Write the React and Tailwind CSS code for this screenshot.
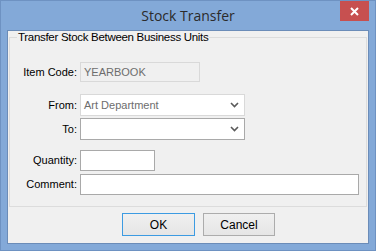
import React from 'react';

const Chevron = () => (
  <svg width="9" height="6" viewBox="0 0 9 6" className="shrink-0">
    <path d="M1 1 L4.5 4.5 L8 1" fill="none" stroke="#5a5a5a" strokeWidth="1.6" />
  </svg>
);

const Label = ({ children }) => (
  <span className="w-[67px] shrink-0 text-right pr-[3px] text-[#000]">{children}</span>
);

const App = () => {
  return (
    <div
      className="w-[376px] h-[251px] bg-[#83a9d8] border border-[#6e92c2] flex flex-col select-none"
      style={{ fontFamily: '"Liberation Sans", Arial, sans-serif' }}
    >
      {/* Title bar */}
      <div className="h-[29px] grid grid-cols-[1fr_auto_1fr] items-start">
        <div />
        <div className="pt-[4px] text-[14px] text-[#2b2b2b] font-['Open_Sans',sans-serif]">Stock Transfer</div>
        <div className="flex justify-end pr-[6px]">
          <div className="w-[29px] h-[20px] bg-[#c75050] flex items-center justify-center">
            <svg width="9" height="9" viewBox="0 0 9 9">
              <path d="M1 1 L8 8 M8 1 L1 8" stroke="#fff" strokeWidth="2" />
            </svg>
          </div>
        </div>
      </div>

      {/* Client area */}
      <div className="mx-[6px] flex-1 mb-[6px] bg-[#f0f0f0] border border-[#6b8cb8] flex flex-col text-[11px]">
        <fieldset className="mx-[1px] mt-[-1px] border border-[#dcdcdc] border-b-0 px-0 pb-0 h-[176px]">
          <legend className="ml-[7px] px-[1px] text-[11.5px] tracking-[-0.3px] text-[#000] leading-[14px]">
            Transfer Stock Between Business Units
          </legend>

          <div className="flex flex-col pl-[3px] pt-[18px]">
            <div className="flex items-center h-[20px]">
              <Label>Item Code:</Label>
              <div className="w-[120px] h-[20px] border border-[#d9d9d9] bg-[#f0f0f0] px-[3px] flex items-center text-[#6d6d6d]">
                YEARBOOK
              </div>
            </div>

            <div className="flex items-center h-[22px] mt-[12px]">
              <Label>From:</Label>
              <div className="w-[165px] h-[22px] border border-[#d9d9d9] bg-white pl-[3px] pr-[5px] flex items-center justify-between text-[#6d6d6d]">
                <span>Art Department</span>
                <Chevron />
              </div>
            </div>

            <div className="flex items-center h-[22px] mt-[2px]">
              <Label>To:</Label>
              <div className="w-[165px] h-[22px] border border-[#a9a9a9] bg-white pl-[3px] pr-[5px] flex items-center justify-end">
                <Chevron />
              </div>
            </div>

            <div className="flex items-center h-[21px] mt-[10px]">
              <Label>Quantity:</Label>
              <div className="w-[75px] h-[21px] border border-[#a9a9a9] bg-white" />
            </div>

            <div className="flex items-center h-[21px] mt-[3px]">
              <Label>Comment:</Label>
              <div className="w-[279px] h-[21px] border border-[#a9a9a9] bg-white" />
            </div>
          </div>
        </fieldset>

        <div className="border-t border-[#dcdcdc] mx-[1px] flex gap-[8px] pt-[6px] pl-[113px]">
          <button className="w-[73px] h-[23px] border border-[#3c9be2] bg-gradient-to-b from-[#f0f0f0] to-[#e5e5e5] text-[12px] text-black">
            OK
          </button>
          <button className="w-[72px] h-[23px] border border-[#acacac] bg-gradient-to-b from-[#f0f0f0] to-[#e5e5e5] text-[12px] text-black">
            Cancel
          </button>
        </div>
      </div>
    </div>
  );
};

export default App;
